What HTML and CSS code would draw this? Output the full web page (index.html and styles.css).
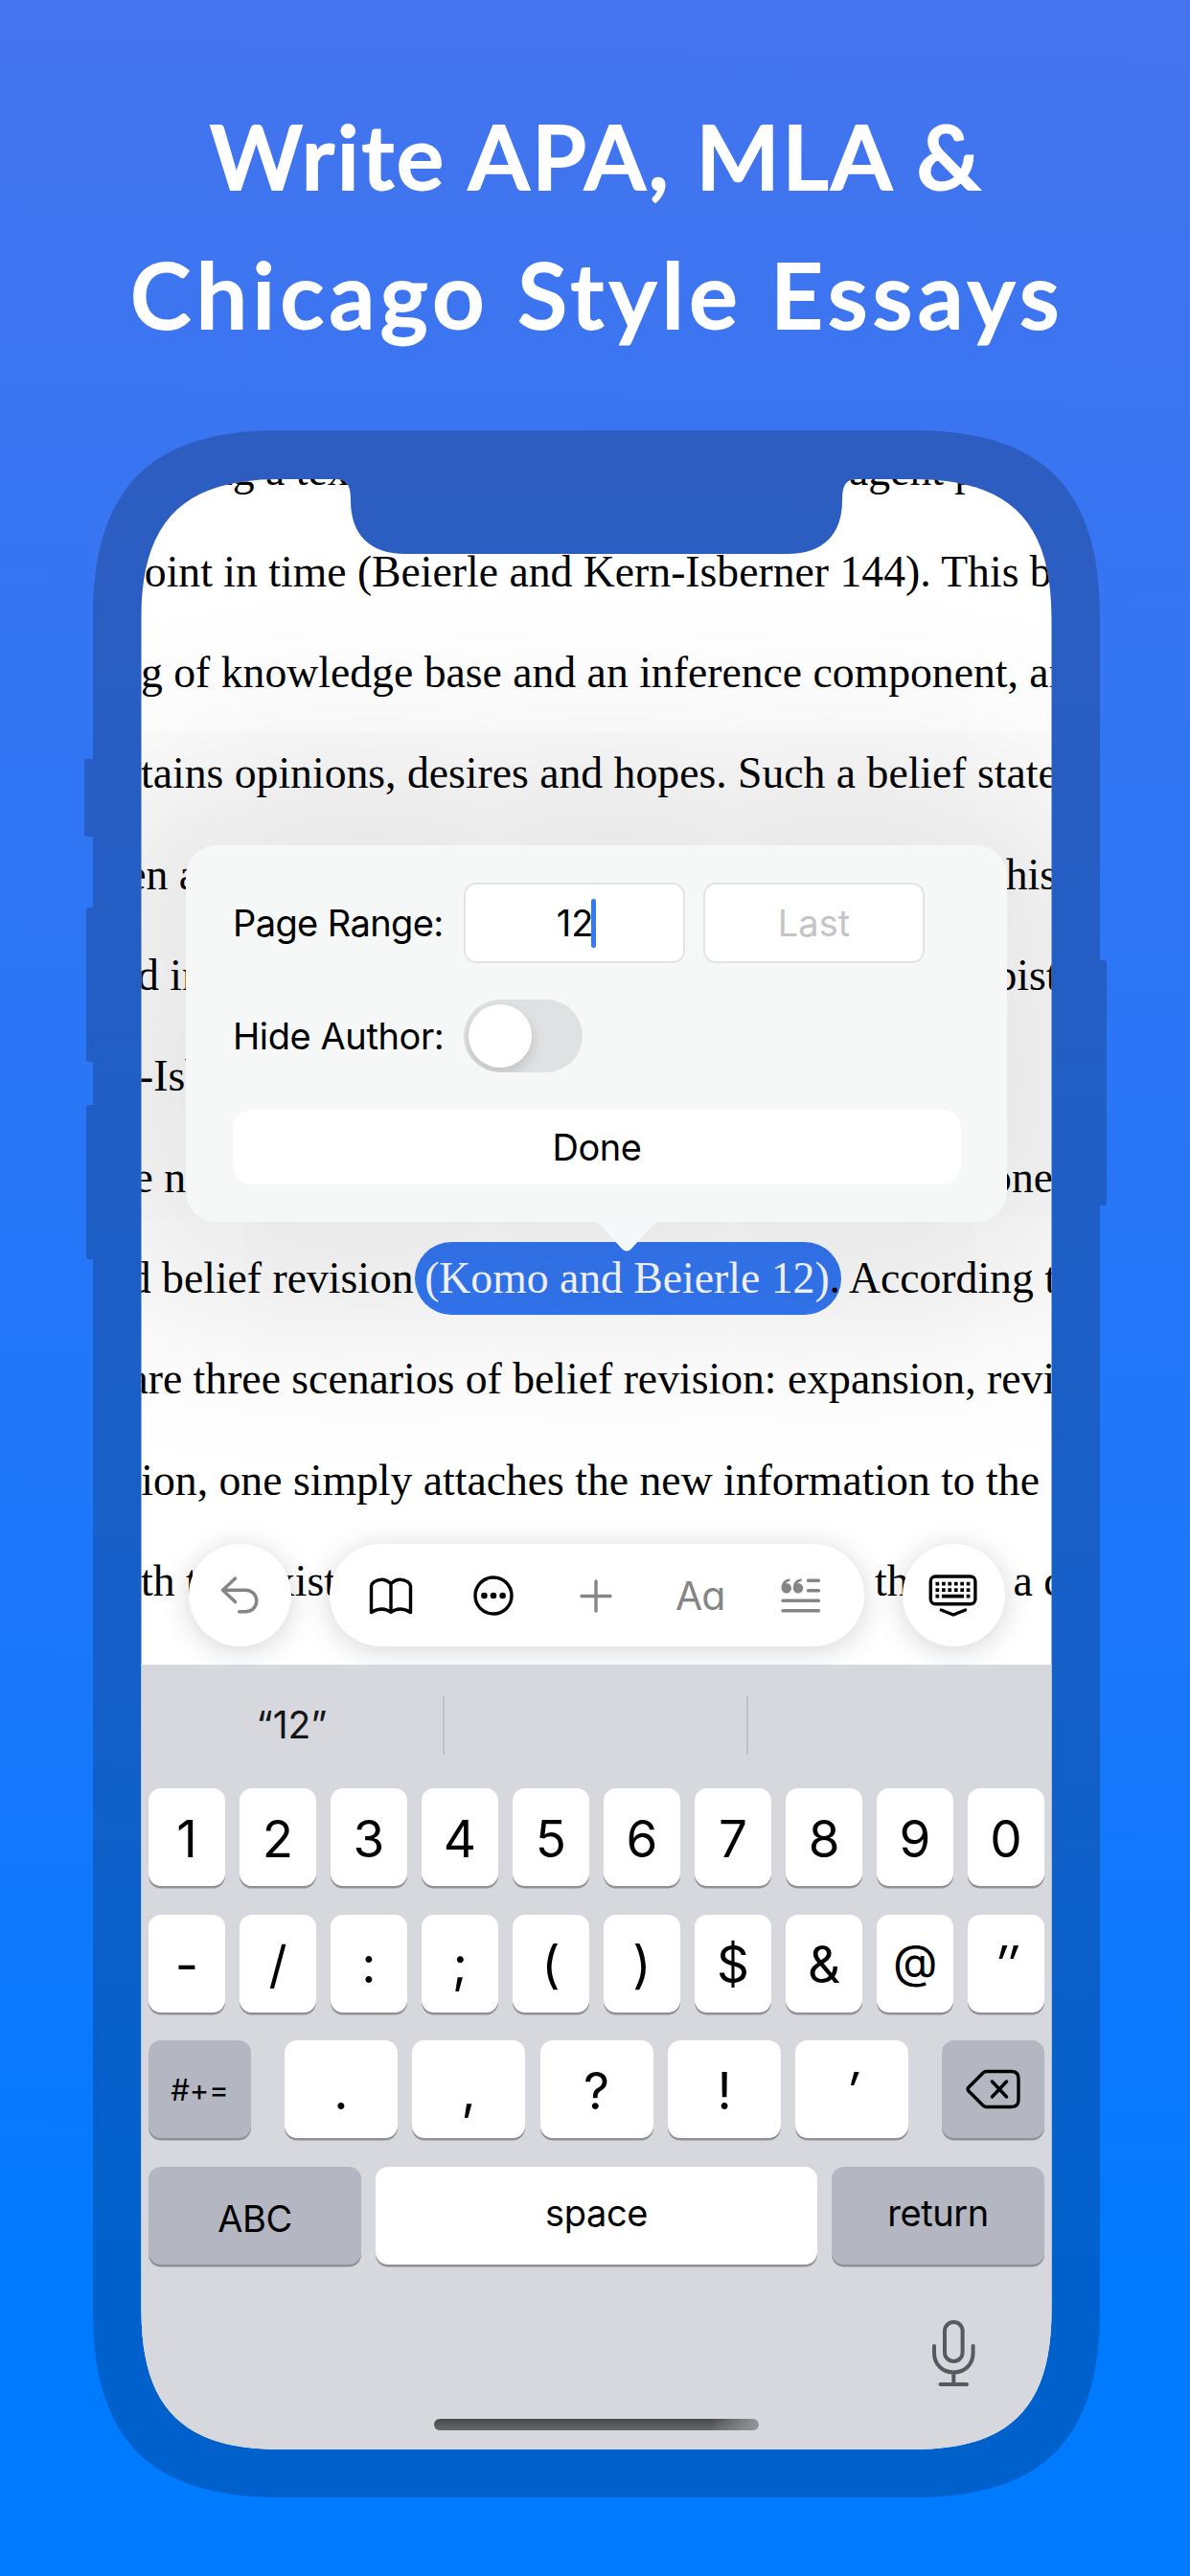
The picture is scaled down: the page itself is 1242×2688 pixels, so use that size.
FILE: index.html
```html
<!DOCTYPE html>
<html lang="en">
<head>
<meta charset="utf-8">
<title>Write APA, MLA &amp; Chicago Style Essays</title>
<link rel="stylesheet" href="styles.css">
</head>
<body>
<main class="poster">
  <h1 class="headline"><span class="headline-a">Write APA, MLA &amp;</span><span class="headline-b">Chicago Style Essays</span></h1>

  <div class="phone">
    <svg class="phone-body" width="1067" height="2157" viewBox="-8 0 1067 2157">
      <path d="M0 195C0 60 60 0 195 0H856C991 0 1051 60 1051 195V553H1055Q1058 553 1058 556V806Q1058 809 1055 809H1051V1962C1051 2097 991 2157 856 2157H195C60 2157 0 2097 0 1962V865H-4Q-7 865 -7 862V707Q-7 704 -4 704H0V659H-4Q-7 659 -7 656V501Q-7 498 -4 498H0V424H-6Q-9 424 -9 421V346Q-9 343 -6 343H0Z"/>
    </svg>

    <div class="screen">
      <section class="document">
        <div class="essay">
          <p class="line l1"><span>ng a tex</span><span>agent p</span></p>
          <p class="line l2">oint in time (Beierle and Kern-Isberner 144). This b</p>
          <p class="line l3">g of knowledge base and an inference component, an</p>
          <p class="line l4">tains opinions, desires and hopes. Such a belief state</p>
          <p class="line l5"><span>en a</span><span>his</span></p>
          <p class="line l6"><span>d in</span><span>pist</span></p>
          <p class="line l7">-Isb</p>
          <p class="line l8"><span>e n</span><span>one</span></p>
          <p class="line l9">d belief revision <mark class="citation">(Komo and Beierle 12)</mark>. According t</p>
          <p class="line l10">are three scenarios of belief revision: expansion, revis</p>
          <p class="line l11">ion, one simply attaches the new information to the</p>
          <p class="line l12"><span>th t</span><span>xist</span><span>th</span><span>a c</span></p>
        </div>

        <form class="popover">
          <div class="row">
            <label class="label range-label">Page Range:</label>
            <div class="field first">12<i class="caret"></i></div>
            <div class="field last">Last</div>
          </div>
          <div class="row author-row">
            <label class="label author-label">Hide Author:</label>
            <div class="switch"><i class="knob"></i></div>
          </div>
          <button class="done" type="button">Done</button>
          <svg class="arrow" width="76" height="34" viewBox="0 0 76 34"><path d="M0 0V1C6 1 9 2 13 7L33 29Q38 34 43 29L63 7C67 2 70 1 76 1V0Z"/></svg>
        </form>

        <nav class="toolbar">
          <div class="pill round muted">
            <svg width="107" height="107" viewBox="0 0 107 107"><path d="M48.500 36L35.500 48.200L48.500 60.600M36 48.200H59.500A11.300 11.300 0 0 1 59.500 70.800H52.500"/></svg>
          </div>
          <div class="pill tools">
            <svg width="48" height="48" viewBox="0 0 48 48"><path d="M3.500 14Q4 11.500 6.500 9.600Q16 4 24 11.500Q32 4 41.500 9.600Q44 11.500 44.500 14V41.500Q33 34.500 24 41.500Q15 34.500 3.500 41.500ZM24 11.500V41"/></svg>
            <svg width="48" height="48" viewBox="0 0 48 48"><circle cx="24" cy="24" r="19"/><g class="solid"><circle cx="14.400" cy="24" r="3.300"/><circle cx="24" cy="24" r="3.300"/><circle cx="33.600" cy="24" r="3.300"/></g></svg>
            <svg class="muted" width="48" height="48" viewBox="0 0 48 48"><path d="M9 24.500H39M24 9V40"/></svg>
            <span class="text-style">Aa</span>
            <svg class="muted" width="48" height="48" viewBox="0 0 48 48"><path d="M31.500 8.200H42.500M31.500 18.700H42.500M5 29.300H42.500M5 39.800H42.500"/><g class="solid"><circle cx="8.800" cy="16.200" r="5.200"/><circle cx="21" cy="16.200" r="5.200"/><path d="M3.600 16.200C3.600 10 7 7 12.500 6.600V8.800C9.500 9.500 7.500 11 7.200 13ZM15.800 16.200C15.800 10 19.200 7 24.700 6.600V8.800C21.700 9.500 19.700 11 19.400 13Z"/></g></svg>
          </div>
          <div class="pill round">
            <svg width="107" height="107" viewBox="0 0 107 107"><rect x="29.300" y="34" width="46.600" height="28.800" rx="5"/><path d="M40.300 69L53 74L65.500 69"/><g class="solid"><path d="M34.500 39.700h3.700v3.700h-3.700zM41 39.700h3.700v3.700h-3.700zM47.400 39.700h3.700v3.700h-3.700zM53.900 39.700h3.700v3.700h-3.700zM60.300 39.700h3.700v3.700h-3.700zM66.700 39.700h3.700v3.700h-3.700zM34.500 46.200h3.700v3.700h-3.700zM41 46.200h3.700v3.700h-3.700zM47.400 46.200h3.700v3.700h-3.700zM53.900 46.200h3.700v3.700h-3.700zM60.300 46.200h3.700v3.700h-3.700zM66.700 46.200h3.700v3.700h-3.700zM34.500 52.700h3.700v3.700h-3.700zM41 52.700h23v3.700h-23zM66.700 52.700h3.700v3.700h-3.700z"/></g></svg>
          </div>
        </nav>
      </section>

      <section class="keyboard">
        <div class="suggestions"><span>“12”</span><span></span><span></span></div>
        <div class="keys">
          <div class="key-row"><b>1</b><b>2</b><b>3</b><b>4</b><b>5</b><b>6</b><b>7</b><b>8</b><b>9</b><b>0</b></div>
          <div class="key-row symbols"><b>-</b><b>/</b><b>:</b><b>;</b><b>(</b><b>)</b><b>$</b><b>&amp;</b><b class="at">@</b><b class="prime">″</b></div>
          <div class="key-row punctuation"><b class="dark more">#+=</b><b>.</b><b>,</b><b>?</b><b>!</b><b class="prime">′</b><b class="dark delete"><svg width="60" height="44" viewBox="0 0 60 44"><path d="M22.500 3.500H48.500Q56 3.500 56 11V33Q56 40.500 48.500 40.500H22.500Q20.500 40.500 19 39L4 24Q2.200 22 4 20L19 5Q20.500 3.500 22.500 3.500ZM28.500 14L43.500 30M43.500 14L28.500 30"/></svg></b></div>
          <div class="key-row bottom"><b class="dark word abc">ABC</b><b class="word">space</b><b class="dark word">return</b></div>
        </div>
        <svg class="mic" width="50" height="74" viewBox="0 0 50 74"><rect x="16" y="4" width="18.600" height="41" rx="9.300"/><path d="M5 29V36C5 48 13.500 56.500 25.300 56.500S45.600 48 45.600 36V29M25.300 56.500V68.500M11.500 69H39"/></svg>
        <div class="home-bar"></div>
      </section>
    </div>
  </div>
</main>
</body>
</html>
```
FILE: styles.css
```css
* { box-sizing: border-box; }

body {
  margin: 0;
  width: 1242px;
  height: 2688px;
  overflow: hidden;
  font-family: Inter, "Liberation Sans", sans-serif;
  color: #000;
}

.poster {
  display: flex;
  flex-direction: column;
  align-items: center;
  height: 2688px;
  background: linear-gradient(181deg, #4574ee 0%, #1b77fb 64%, #007aff 89%);
}

/* Headline */
.headline {
  display: flex;
  flex-direction: column;
  align-items: center;
  width: 100%;
  height: 449px;
  margin: 0;
  padding-top: 90px;
  font: 600 93px/144px Lato, sans-serif;
  color: #fff;
  white-space: nowrap;
  -webkit-text-stroke: 2px #fff;
}
.headline-a { letter-spacing: 2.700px; padding-left: 3px; }
.headline-b { font-size: 95px; letter-spacing: 5.500px; padding-left: 5px; }

/* Phone */
.phone {
  position: relative;
  width: 1051px;
  height: 2157px;
  padding: 51px 50px 50px;
  margin-left: 3px;
}
.phone-body {
  position: absolute;
  top: 0;
  left: -8px;
  overflow: visible;
  fill: rgba(0, 0, 0, .2);
}
.screen {
  position: relative;
  display: flex;
  flex-direction: column;
  width: 951px;
  height: 2056px;
  background: #fff;
  clip-path: path("M.5 145C.5 44 44 0 145 0H203C215 0 219 6 219 22C219 58 239 78 276 78H675C712 78 732 58 732 22C732 6 736 0 748 0H806C907 0 950.5 44 950.5 145V1911C950.5 2012 907 2056 806 2056H145C44 2056 .5 2012 .5 1911Z");
}

/* Essay text */
.document {
  position: relative;
  height: 1237px;
  overflow: hidden;
}
.essay {
  margin-top: -61.800px;
  font: 45.700px/105.350px "Liberation Serif", serif;
  white-space: nowrap;
}
.line { margin: 0; height: 105.350px; }
.l1 { display: grid; grid-template-columns: 666px auto; margin-left: 73px; }
.l2 { margin-left: 3.800px; }
.l3 { margin-left: 0; }
.l4 { margin-left: 0; }
.l5 { display: grid; grid-template-columns: 917.500px auto; margin-left: -14.800px; }
.l6 { display: grid; grid-template-columns: 895.500px auto; margin-left: -4px; }
.l7 { margin-left: -2px; }
.l8 { display: grid; grid-template-columns: 893.500px auto; margin-left: -7.400px; }
.l9 { margin-left: -12.200px; }
.l10 { margin-left: -12.600px; }
.l11 { margin-left: .3px; }
.l12 { display: grid; grid-template-columns: 138px 628px 144.500px auto; }
.citation {
  margin: 0 -12px 0 -10px;
  padding: 12px 12px 13px 10px;
  border-radius: 38px;
  background: #3478f6;
  color: #fff;
}

/* Citation popover */
.popover {
  position: absolute;
  top: 382px;
  left: 47px;
  width: 857px;
  height: 393px;
  padding: 39px 49px;
  border-radius: 32px;
  background: #f6f8f8;
  box-shadow: 0 0 200px 80px rgba(10, 10, 0, .12);
  font-size: 38px;
}
.row { display: flex; align-items: center; height: 84px; }
.author-row { height: 76px; margin-top: 38px; }
.label { width: 241px; white-space: nowrap; }
.range-label { letter-spacing: -.6px; }
.author-label { letter-spacing: -.4px; }
.field {
  display: flex;
  align-items: center;
  justify-content: center;
  width: 231px;
  height: 84px;
  margin-right: 19px;
  border: 2px solid #e3e5e5;
  border-radius: 13px;
  background: #fff;
}
.caret {
  width: 5px;
  height: 51px;
  margin: 0 -4px 0 -2px;
  border-radius: 2px;
  background: #3478f6;
}
.last { color: #c4c4c6; }
.switch {
  width: 124px;
  padding: 5px;
  border-radius: 38px;
  background: #e0e1e3;
  overflow: hidden;
}
.knob {
  display: block;
  width: 66px;
  height: 66px;
  border-radius: 50%;
  background: #fff;
  box-shadow: 0 6px 14px rgba(0, 0, 0, .15);
}
.done {
  display: block;
  width: 760px;
  height: 78px;
  margin-top: 39px;
  padding: 0;
  border: 0;
  border-radius: 20px;
  background: #fff;
  font: inherit;
  letter-spacing: -.4px;
  color: inherit;
}
.arrow {
  position: absolute;
  top: 392px;
  left: 422px;
  fill: #f5f8fa;
}

/* Floating toolbar */
.toolbar {
  position: absolute;
  top: 1111px;
  left: 50px;
  display: flex;
  justify-content: space-between;
  width: 852px;
}
.toolbar svg, .delete svg, .mic {
  fill: none;
  stroke: #000;
  stroke-width: 3.400;
  stroke-linecap: round;
  stroke-linejoin: round;
}
.toolbar .muted svg, .toolbar svg.muted { stroke: #858585; }
.toolbar .solid { fill: #000; stroke: none; }
.toolbar .muted .solid { fill: #858585; }
.pill {
  height: 107px;
  border-radius: 54px;
  background: #fff;
  box-shadow: 0 4px 30px rgba(0, 0, 0, .17);
}
.round { width: 107px; }
.tools {
  display: flex;
  align-items: center;
  justify-content: space-between;
  width: 558px;
  padding: 0 42px 0 40px;
}
.text-style {
  width: 48px;
  font-size: 41px;
  font-feature-settings: "cv11";
  letter-spacing: -1px;
  text-align: center;
  color: #858585;
}

/* Keyboard */
.keyboard {
  display: flex;
  flex-direction: column;
  height: 819px;
  background: #d6d8dd;
}
.suggestions {
  display: grid;
  grid-template-columns: 315px 317px 1fr;
  height: 61px;
  margin: 32px 0 36px;
  font-size: 39px;
  line-height: 62px;
  text-align: center;
  color: #151517;
}
.suggestions span + span { border-left: 2px solid #c0c1c6; }
.keys {
  display: grid;
  gap: 29.500px;
  padding: 0 8px;
}
.key-row {
  display: grid;
  grid-template-columns: repeat(10, 1fr);
  gap: 15.200px;
  height: 102px;
}
.key-row b {
  display: flex;
  align-items: center;
  justify-content: center;
  padding-top: 4px;
  border-radius: 13px;
  background: #fff;
  box-shadow: 0 2.500px 0 #909196;
  font-size: 53px;
  font-weight: 400;
}
.key-row .dark { background: #b4b7c1; }
.key-row .prime { font-style: italic; }
.key-row.symbols b { padding-top: 2px; }
.key-row.symbols .at { padding: 0 0 4px; font-size: 48px; }
.punctuation { grid-template-columns: 126.600px repeat(5, 118.200px) 1fr; }
.punctuation .more { margin-right: 19.600px; padding-top: 0; font-size: 31px; }
.punctuation .delete { margin-left: 19.600px; padding-top: 0; }
.bottom { grid-template-columns: 222px 1fr 222px; }
.key-row .word { padding: 0 0 5px; font-size: 38px; letter-spacing: -.4px; }
.key-row .abc { padding: 6px 0 0; }
.mic {
  align-self: flex-end;
  margin: 56px 78px 0 0;
  stroke: #56595d;
  stroke-width: 4;
}
.home-bar {
  align-self: center;
  width: 339px;
  height: 12px;
  margin-top: 31px;
  border-radius: 6px;
  background: linear-gradient(90deg, rgba(150, 151, 154, 0) 85%, #96979a), linear-gradient(#464749, #68696b);
}
```
